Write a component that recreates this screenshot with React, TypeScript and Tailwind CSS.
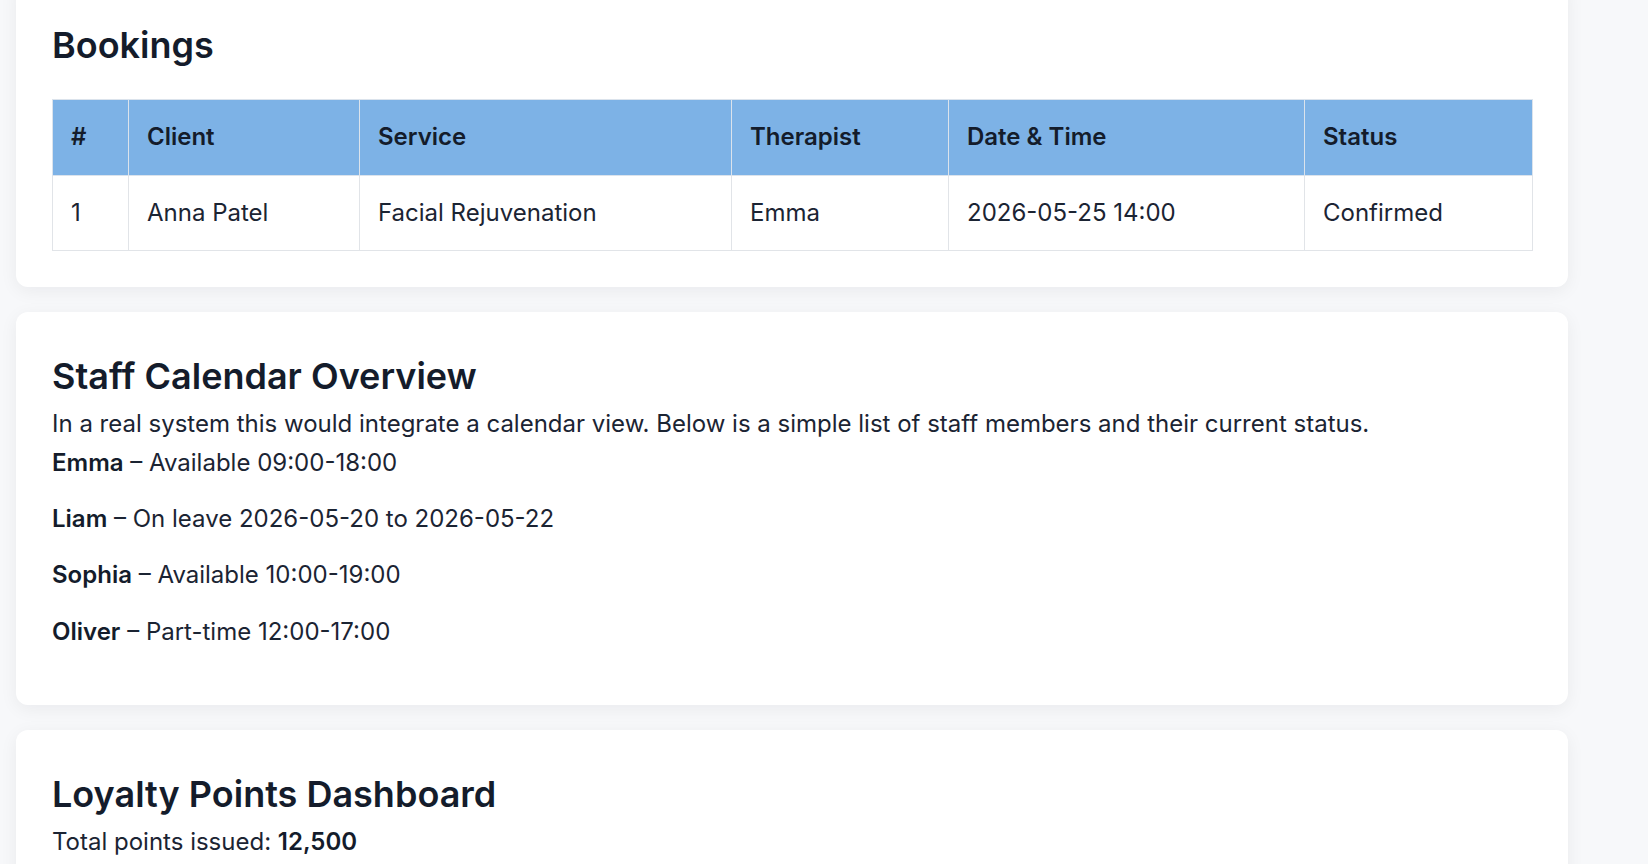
const bookings = [
  {
    id: 1,
    client: 'Anna Patel',
    service: 'Facial Rejuvenation',
    therapist: 'Emma',
    when: '2026-05-25 14:00',
    status: 'Confirmed',
  },
]

const staff = [
  { name: 'Emma', note: 'Available 09:00-18:00' },
  { name: 'Liam', note: 'On leave 2026-05-20 to 2026-05-22' },
  { name: 'Sophia', note: 'Available 10:00-19:00' },
  { name: 'Oliver', note: 'Part-time 12:00-17:00' },
]

const columns = ['#', 'Client', 'Service', 'Therapist', 'Date & Time', 'Status']

function Card({ title, children }: { title: string; children: React.ReactNode }) {
  return (
    <section className="w-[1552px] rounded-xl bg-white px-[36px] pt-[36px] pb-[36px] shadow-[0_4px_18px_rgba(15,23,42,0.06)]">
      <h2 className="mt-[7px] mb-[7px] text-[36px] leading-[43.2px] font-semibold text-[#141c2b]">{title}</h2>
      {children}
    </section>
  )
}

export default function App() {
  return (
    <div
      className="h-[864px] overflow-hidden bg-[#f7f8fa] text-[24px] leading-[38.4px] text-[#1b2433]"
      style={{ fontFamily: 'Inter, "Noto Sans", sans-serif' }}
    >
      <div className="-mt-[19px] flex flex-col gap-[25px] pl-[16px]">
        <Card title="Bookings">
          <table className="mt-[32px] w-full table-fixed border-collapse">
            <colgroup>
              <col className="w-[76px]" />
              <col className="w-[231px]" />
              <col className="w-[372px]" />
              <col className="w-[217px]" />
              <col className="w-[356px]" />
              <col className="w-[228px]" />
            </colgroup>
            <thead>
              <tr className="bg-[#7db2e6]">
                {columns.map((c) => (
                  <th
                    key={c}
                    className="border border-[#dbe3ec] px-[18px] py-[18px] text-left font-semibold text-[#141c2b]"
                  >
                    {c}
                  </th>
                ))}
              </tr>
            </thead>
            <tbody>
              {bookings.map((b) => (
                <tr key={b.id}>
                  <td className="border border-[#e1e4e8] px-[18px] py-[18px]">{b.id}</td>
                  <td className="border border-[#e1e4e8] px-[18px] py-[18px]">{b.client}</td>
                  <td className="border border-[#e1e4e8] px-[18px] py-[18px]">{b.service}</td>
                  <td className="border border-[#e1e4e8] px-[18px] py-[18px]">{b.therapist}</td>
                  <td className="border border-[#e1e4e8] px-[18px] py-[18px]">{b.when}</td>
                  <td className="border border-[#e1e4e8] px-[18px] py-[18px]">{b.status}</td>
                </tr>
              ))}
            </tbody>
          </table>
        </Card>

        <Card title="Staff Calendar Overview">
          <p>
            In a real system this would integrate a calendar view. Below is a simple list of staff members and their
            current status.
          </p>
          <div>
            {staff.map((s) => (
              <p key={s.name} className="mb-[18px]">
                <span className="font-semibold text-[#141c2b]">{s.name}</span> – {s.note}
              </p>
            ))}
          </div>
        </Card>

        <Card title="Loyalty Points Dashboard">
          <p>
            Total points issued: <span className="font-semibold text-[#141c2b]">12,500</span>
          </p>
        </Card>
      </div>
    </div>
  )
}
